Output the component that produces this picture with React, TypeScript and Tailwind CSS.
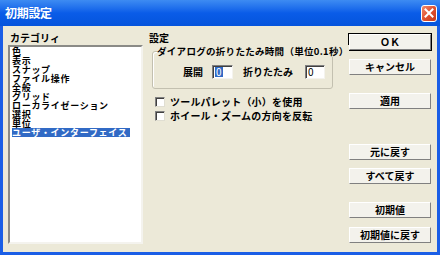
import React from "react";

const categories = [
  "色",
  "表示",
  "スナップ",
  "ファイル操作",
  "全般",
  "グリッド",
  "ローカライゼーション",
  "選択",
  "単位",
  "ユーザ・インターフェイス",
];

function Button({ label, isDefault = false, className = "" }: { label: string; isDefault?: boolean; className?: string }) {
  return (
    <div className={`${className} ${isDefault ? "border border-black" : "border border-transparent"}`}>
      <div className="h-[16px] flex items-center justify-center bg-[#f3f2ec] border border-t-white border-l-white border-r-[#808080] border-b-[#808080] text-[10px] leading-none font-bold text-black">
        {label}
      </div>
    </div>
  );
}

function Checkbox({ label }: { label: string }) {
  return (
    <div className="flex items-center h-[14px] pl-[6px]">
      <span className="w-[10px] h-[10px] bg-white border border-t-[#808080] border-l-[#808080] border-r-[#e0ded2] border-b-[#e0ded2] shadow-[inset_1px_1px_0_#404040]" />
      <span className="ml-[5px] text-[10px] leading-none font-bold tracking-[0.2px]">{label}</span>
    </div>
  );
}

export default function App() {
  return (
    <div className="w-[440px] h-[255px] flex flex-col font-['Noto_Sans_CJK_JP',sans-serif] text-black select-none">
      {/* Title bar */}
      <div className="h-[26px] flex items-center bg-gradient-to-b from-[#3d8bf2] via-[#0a5ce8] to-[#0554dc] pl-[5px]">
        <span className="text-white text-[12px] font-bold leading-none tracking-[-0.3px]">初期設定</span>
        <div className="ml-auto mr-[3px] w-[16px] h-[17px] rounded-[3px] border border-white bg-gradient-to-br from-[#f08a6c] via-[#e0502f] to-[#c73a18] flex items-center justify-center">
          <svg width="10" height="10" viewBox="0 0 10 10">
            <path d="M1.5 1.5 L8.5 8.5 M8.5 1.5 L1.5 8.5" stroke="white" strokeWidth="2" strokeLinecap="square" />
          </svg>
        </div>
      </div>

      {/* Body */}
      <div className="flex-1 flex bg-[#ece9d8] border-x-[3px] border-b-[3px] border-[#1a5ee6] pl-[5px]">
        {/* Category list */}
        <div className="w-[135px] flex flex-col pt-[6px]">
          <span className="ml-[2px] h-[13px] text-[10px] leading-[12px] font-bold">カテゴリィ</span>
          <div className="h-[199px] bg-white border-2 border-t-[#8a8a86] border-l-[#8a8a86] border-r-[#f4f3ee] border-b-[#f4f3ee] pl-[2px]">
            {categories.map((c, i) => (
              <div
                key={c}
                className={`h-[9px] text-[9px] leading-[9px] font-semibold tracking-[0.7px] whitespace-nowrap ${
                  i === categories.length - 1 ? "bg-[#316ac5] text-white w-[118px]" : ""
                }`}
              >
                {c}
              </div>
            ))}
          </div>
        </div>

        {/* Settings */}
        <div className="w-[184px] ml-[6px] flex flex-col pt-[6px]">
          <span className="h-[13px] text-[10px] leading-[12px] font-bold">設定</span>
          <div className="relative mt-[6px] ml-[3px] w-[181px] h-[38px] border border-[#c3c0b0] rounded-[3px] shadow-[inset_1px_1px_0_white]">
            <span className="absolute -top-[7px] left-[4px] bg-[#ece9d8] whitespace-nowrap text-[9.5px] leading-[12px] font-bold tracking-[0.3px]">
              ダイアログの折りたたみ時間（単位0.1秒）
            </span>
            <div className="flex items-center justify-end h-full pt-[4px] pr-[7px]">
              <span className="text-[10px] leading-none font-bold">展開</span>
              <div className="ml-[9px] w-[21px] h-[14px] bg-white border border-t-[#808080] border-l-[#808080] border-r-[#f4f3ee] border-b-[#f4f3ee] shadow-[inset_1px_1px_0_#404040] flex items-center pl-[2px]">
                <span className="bg-[#316ac5] text-white text-[10px] leading-[10px] px-[1px]">0</span>
              </div>
              <span className="ml-[10px] text-[10px] leading-none font-bold">折りたたみ</span>
              <div className="ml-[12px] w-[20px] h-[14px] bg-white border border-t-[#808080] border-l-[#808080] border-r-[#f4f3ee] border-b-[#f4f3ee] shadow-[inset_1px_1px_0_#404040] flex items-center pl-[2px]">
                <span className="text-[10px] leading-[10px]">0</span>
              </div>
            </div>
          </div>
          <div className="mt-[6px] flex flex-col">
            <Checkbox label="ツールパレット（小）を使用" />
            <Checkbox label="ホイール・ズームの方向を反転" />
          </div>
        </div>

        {/* Buttons */}
        <div className="w-[84px] ml-[15px] flex flex-col pt-[7px]">
          <Button label="ＯＫ" isDefault />
          <Button label="キャンセル" className="mt-[7px]" />
          <Button label="適用" className="mt-[16px]" />
          <Button label="元に戻す" className="mt-[33px]" />
          <Button label="すべて戻す" className="mt-[6px]" />
          <Button label="初期値" className="mt-[16px]" />
          <Button label="初期値に戻す" className="mt-[7px]" />
        </div>
      </div>
    </div>
  );
}
